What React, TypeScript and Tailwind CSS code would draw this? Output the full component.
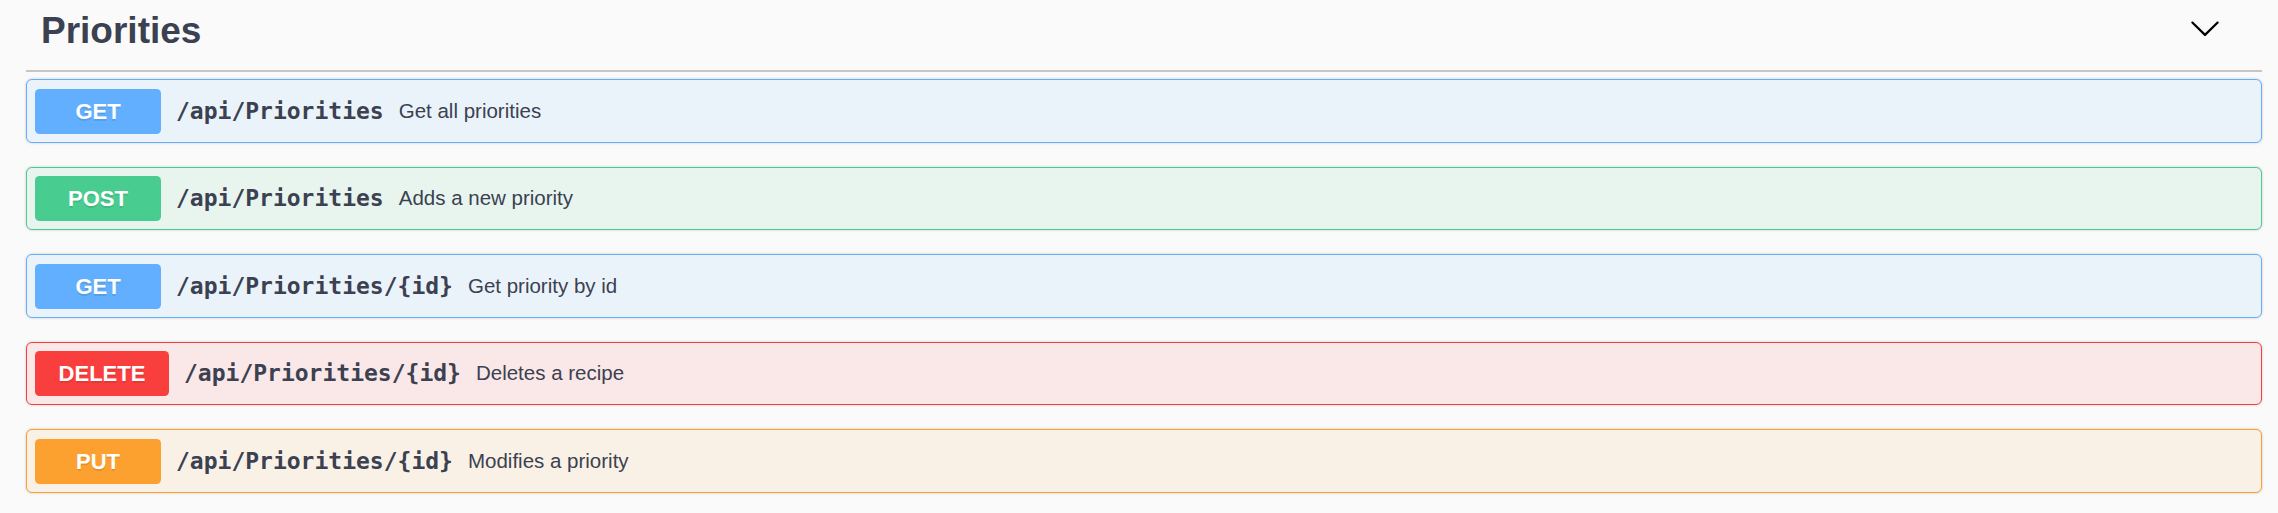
type Operation = {
  method: string;
  path: string;
  summary: string;
  row: string;
  badge: string;
};

// swagger-style opblocks, colours follow the method
const OPERATIONS: Operation[] = [
  {
    method: "GET",
    path: "/api/Priorities",
    summary: "Get all priorities",
    row: "border-[#61affe] bg-[#ebf3fa]",
    badge: "w-[126px] bg-[#61affe]",
  },
  {
    method: "POST",
    path: "/api/Priorities",
    summary: "Adds a new priority",
    row: "border-[#49cc90] bg-[#e8f5ef]",
    badge: "w-[126px] bg-[#49cc90]",
  },
  {
    method: "GET",
    path: "/api/Priorities/{id}",
    summary: "Get priority by id",
    row: "border-[#61affe] bg-[#ebf3fa]",
    badge: "w-[126px] bg-[#61affe]",
  },
  {
    method: "DELETE",
    path: "/api/Priorities/{id}",
    summary: "Deletes a recipe",
    row: "border-[#f93e3e] bg-[#fae7e7]",
    badge: "w-[134px] bg-[#f93e3e]",
  },
  {
    method: "PUT",
    path: "/api/Priorities/{id}",
    summary: "Modifies a priority",
    row: "border-[#fca130] bg-[#faf1e6]",
    badge: "w-[126px] bg-[#fca130]",
  },
];

function Chevron() {
  return (
    <svg viewBox="0 0 20 20" className="mt-[1.6px] h-8 w-8" aria-hidden>
      <path
        fill="#000"
        d="M17.418 6.109c.272-.268.709-.268.979 0s.271.701 0 .969l-7.908 7.83c-.27.268-.707.268-.979 0l-7.908-7.83c-.27-.268-.27-.701 0-.969.271-.268.709-.268.979 0L10 13.25l7.418-7.141z"
      />
    </svg>
  );
}

function OperationRow({ op }: { op: Operation }) {
  return (
    <div
      className={`flex h-[63.5px] items-center rounded-[6px] border px-[8px] shadow-[0_0_3px_rgba(0,0,0,0.19)] ${op.row}`}
    >
      <span
        className={`flex h-[45px] shrink-0 items-center justify-center rounded-[4.5px] text-[22px] font-bold text-white [text-shadow:0_1.5px_0_rgba(0,0,0,0.1)] ${op.badge}`}
      >
        {op.method}
      </span>
      <span className="px-[15px] font-['DejaVu_Sans_Mono',monospace] text-[23px] font-bold">
        {op.path}
      </span>
      <span className="text-[20.5px]">{op.summary}</span>
    </div>
  );
}

export default function App() {
  return (
    <div className="min-h-screen bg-[#fafafa] pl-[26px] pr-[16px] font-['Liberation_Sans',Arial,sans-serif] text-[#3b4151]">
      <div className="flex h-[72px] items-start justify-between border-b-2 border-[#c6c6c6] pl-[15px] pr-[41px] pt-[10px]">
        <h3 className="text-[37px] font-bold leading-[41px]">Priorities</h3>
        <Chevron />
      </div>
      <div className="mt-[7.3px] flex flex-col gap-[24px]">
        {OPERATIONS.map((op, i) => (
          <OperationRow key={i} op={op} />
        ))}
      </div>
    </div>
  );
}
